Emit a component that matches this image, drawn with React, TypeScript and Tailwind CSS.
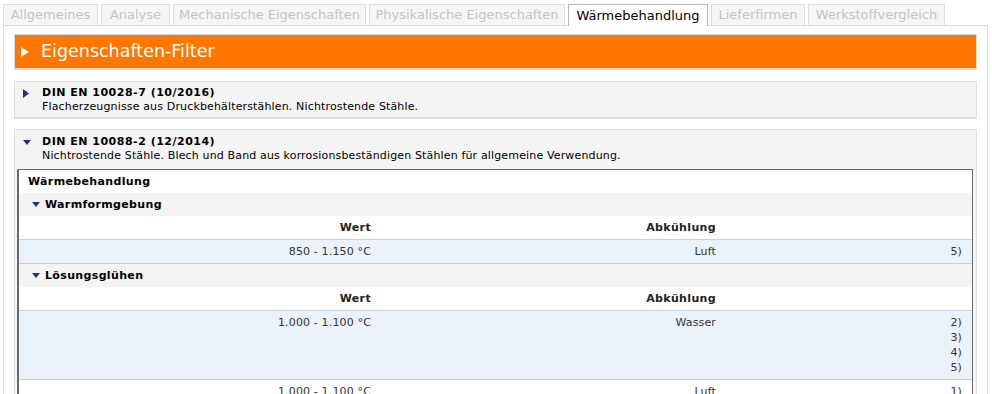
import React from 'react'

const tabs = [
  { label: 'Allgemeines', w: 'w-[95px]' },
  { label: 'Analyse', w: 'w-[69px]' },
  { label: 'Mechanische Eigenschaften', w: 'w-[193px]' },
  { label: 'Physikalische Eigenschaften', w: 'w-[196px]' },
  { label: 'Wärmebehandlung', w: 'w-[140px]', active: true },
  { label: 'Lieferfirmen', w: 'w-[94px]' },
  { label: 'Werkstoffvergleich', w: 'w-[137px]' },
]

function RightTri({ color, w = 6, h = 9 }: { color: string; w?: number; h?: number }) {
  return (
    <svg width={w} height={h} viewBox={`0 0 ${w} ${h}`} className="shrink-0">
      <polygon points={`0,0 ${w},${h / 2} 0,${h}`} fill={color} />
    </svg>
  )
}

function DownTri({ color }: { color: string }) {
  return (
    <svg width="8" height="5" viewBox="0 0 8 5" className="shrink-0">
      <polygon points="0,0 8,0 4,5" fill={color} />
    </svg>
  )
}

function GroupRow({ title }: { title: string }) {
  return (
    <div className="flex h-[23px] items-center gap-[5px] bg-[#f4f4f4] pl-[13px] font-bold tracking-[0.35px]">
      <DownTri color="#2c2c80" />
      <span>{title}</span>
    </div>
  )
}

function HeadRow() {
  return (
    <div className="grid h-[23px] grid-cols-[362px_345px_1fr] items-center bg-white pr-[10px] font-bold tracking-[0.35px] text-[#222]">
      <div className="pr-[10px] text-right">Wert</div>
      <div className="pr-[10px] text-right">Abkühlung</div>
      <div />
    </div>
  )
}

function DataRow({ wert, abk, notes, blue }: { wert: string; abk: string; notes: string[]; blue?: boolean }) {
  return (
    <div
      className={
        'grid grid-cols-[362px_345px_1fr] py-[4px] pr-[10px] leading-[15px] tracking-[0.15px] text-[#333] ' +
        (blue ? 'bg-[#eaf2fa] border-y border-[#bcd5ea]' : 'bg-white')
      }
    >
      <div className="pr-[10px] text-right">{wert}</div>
      <div className="pr-[10px] text-right">{abk}</div>
      <div className="flex flex-col items-end">
        {notes.map((n) => (
          <span key={n}>{n}</span>
        ))}
      </div>
    </div>
  )
}

export default function App() {
  return (
    <div className="h-[394px] w-[992px] overflow-hidden bg-white font-['DejaVu_Sans',Verdana,sans-serif] text-[11px] text-black">
      <div className="flex gap-[3px] pl-[3px] pt-[4px]">
        {tabs.map((t) =>
          t.active ? (
            <div
              key={t.label}
              className={`${t.w} relative z-10 -mb-px flex h-[22px] items-center justify-center border border-b-0 border-[#b5b5b5] bg-white text-[13px] text-black`}
            >
              {t.label}
            </div>
          ) : (
            <div
              key={t.label}
              className={`${t.w} flex h-[21px] items-center justify-center border border-b-0 border-[#dedede] bg-[#f6f6f6] text-[13px] text-[#c4c4c4]`}
            >
              {t.label}
            </div>
          )
        )}
      </div>
      <div className="ml-[3px] mr-[4px] h-[400px] border border-b-0 border-[#dcdcdc] px-[10px] pt-[8px]">
        <div className="flex h-[36px] items-center gap-[12px] border border-b-2 border-[#dddddd] bg-[#ff7700] pl-[6px] text-white">
          <RightTri color="#ffffff" w={8} h={10} />
          <span className="text-[17.5px] leading-none">Eigenschaften-Filter</span>
        </div>

        <div className="mt-[11px] border border-b-2 border-[#e0e0e0] bg-[#f4f4f4] pb-[3px] pl-[8px] pt-[4px] leading-[14px] tracking-[0.15px]">
          <div className="flex items-center gap-[13px]">
            <RightTri color="#2c2c80" />
            <span className="font-bold tracking-[0.5px]">DIN EN 10028-7 (10/2016)</span>
          </div>
          <div className="pl-[19px]">Flacherzeugnisse aus Druckbehälterstählen. Nichtrostende Stähle.</div>
        </div>

        <div className="mt-[10px] border border-[#e0e0e0] bg-[#f4f4f4] pl-[2px] pr-[3px] pt-[5px] leading-[14px]">
          <div className="flex items-center gap-[11px] pl-[6px]">
            <DownTri color="#2c2c80" />
            <span className="font-bold tracking-[0.5px]">DIN EN 10088-2 (12/2014)</span>
          </div>
          <div className="pl-[25px] tracking-[0.15px]">
            Nichtrostende Stähle. Blech und Band aus korrosionsbeständigen Stählen für allgemeine Verwendung.
          </div>

          <div className="mt-[6px] border border-l-2 border-[#6a6a6a] bg-white">
            <div className="flex h-[23px] items-center pl-[9px] font-bold tracking-[0.35px]">Wärmebehandlung</div>
            <GroupRow title="Warmformgebung" />
            <HeadRow />
            <DataRow blue wert="850 - 1.150 °C" abk="Luft" notes={['5)']} />
            <GroupRow title="Lösungsglühen" />
            <HeadRow />
            <DataRow blue wert="1.000 - 1.100 °C" abk="Wasser" notes={['2)', '3)', '4)', '5)']} />
            <DataRow wert="1.000 - 1.100 °C" abk="Luft" notes={['1)']} />
          </div>
        </div>
      </div>
    </div>
  )
}
